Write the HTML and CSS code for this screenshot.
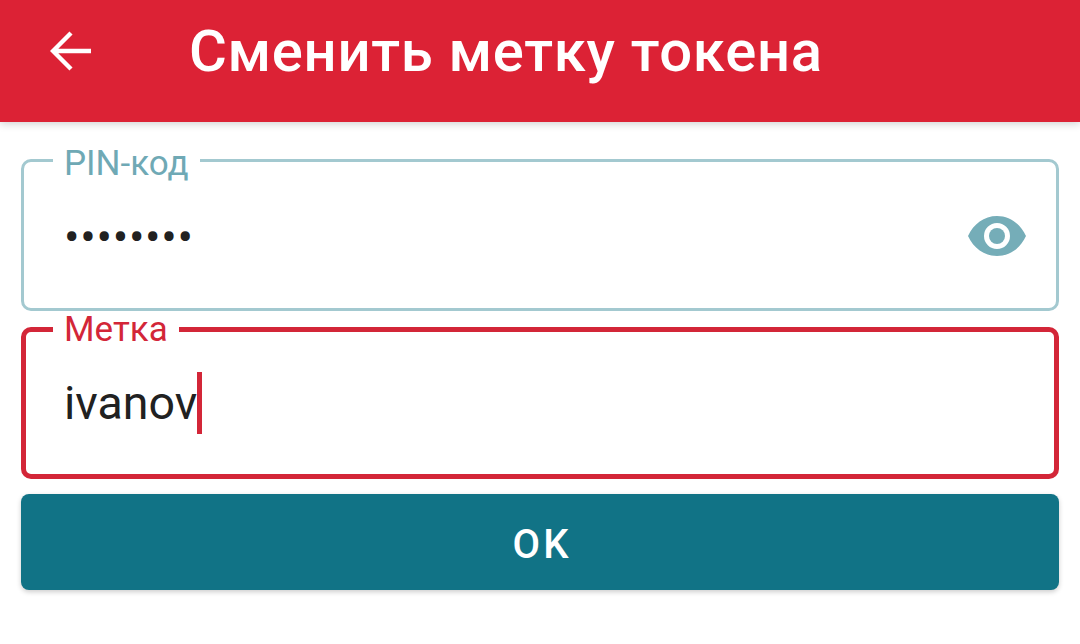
FILE: index.html
```html
<!DOCTYPE html>
<html lang="ru">
<head>
<meta charset="UTF-8">
<meta name="viewport" content="width=device-width, initial-scale=1.0">
<title>Сменить метку токена</title>
<link rel="stylesheet" href="styles.css">
</head>
<body>
<header class="toolbar">
  <svg class="back-icon" viewBox="0 0 42 42" width="42" height="42" aria-hidden="true">
    <path d="M41 21H3M21 3L3 21l18 18" fill="none" stroke="#fff" stroke-width="4.4"/>
  </svg>
  <h1 class="toolbar-title">Сменить метку токена</h1>
</header>

<main class="content">
  <div class="field field-pin">
    <span class="field-label">PIN-код</span>
    <span class="pin-dots">••••••••</span>
    <svg class="eye-icon" viewBox="0 0 58 40" width="58" height="40" aria-hidden="true">
      <path fill-rule="evenodd" fill="#75adb8" d="M29 0C16 0 5.500 8 0 20c5.500 12 16 20 29 20s23.500-8 29-20C52.500 8 42 0 29 0zm0 33a13 13 0 1 1 0-26 13 13 0 0 1 0 26z"/>
      <circle cx="29" cy="20" r="8" fill="#75adb8"/>
    </svg>
  </div>

  <div class="field field-active">
    <span class="field-label">Метка</span>
    <span class="field-value">ivanov</span><span class="caret"></span>
  </div>

  <button class="ok-button">OK</button>
</main>
</body>
</html>
```

FILE: styles.css
```css
* { box-sizing: border-box; }
body {
  margin: 0;
  height: 644px;
  overflow: hidden;
  background: #fff;
  font-family: Roboto, "Noto Sans", sans-serif;
}
.toolbar {
  height: 122px;
  background: #dc2235;
  box-shadow: 0 2px 8px rgba(0,0,0,0.18);
  display: flex;
  align-items: center;
  padding: 0 0 20px 50px;
  color: #fff;
}
.back-icon { flex: none; }
.toolbar-title {
  margin: 0 0 0 97px;
  font-size: 58px;
  font-weight: 500;
  line-height: 64px;
  letter-spacing: 0.7px;
}
.content {
  padding: 37px 21px 0;
  display: flex;
  flex-direction: column;
}
.field {
  position: relative;
  height: 152px;
  border: 3px solid #a3c9d0;
  border-radius: 10px;
  display: flex;
  align-items: center;
  padding: 0 30px 0 40px;
}
.field-label {
  position: absolute;
  left: 29px;
  top: -16px;
  padding: 0 11px;
  background: #fff;
  font-size: 35px;
  line-height: 36px;
  color: #6fa9b5;
}
.pin-dots {
  font-size: 46px;
  color: #212121;
  letter-spacing: 0.7px;
  padding-top: 4px;
}
.eye-icon {
  margin-left: auto;
  margin-top: 2px;
}
.field-active {
  height: 152px;
  margin-top: 16px;
  border: 5px solid #d32638;
  padding-left: 38px;
  padding-bottom: 1px;
}
.field-active .field-label {
  left: 27px;
  top: -20px;
  color: #d32638;
}
.field-value {
  font-size: 46.5px;
  color: #212121;
}
.caret {
  width: 5px;
  height: 62px;
  background: #d32638;
}
.ok-button {
  height: 96px;
  margin-top: 15px;
  padding: 4px 0 0 4px;
  border: none;
  border-radius: 8px;
  background: #117386;
  box-shadow: 0 2px 5px rgba(0,0,0,0.2);
  color: #fff;
  font-family: inherit;
  font-size: 40px;
  font-weight: 500;
  letter-spacing: 3px;
}
```
